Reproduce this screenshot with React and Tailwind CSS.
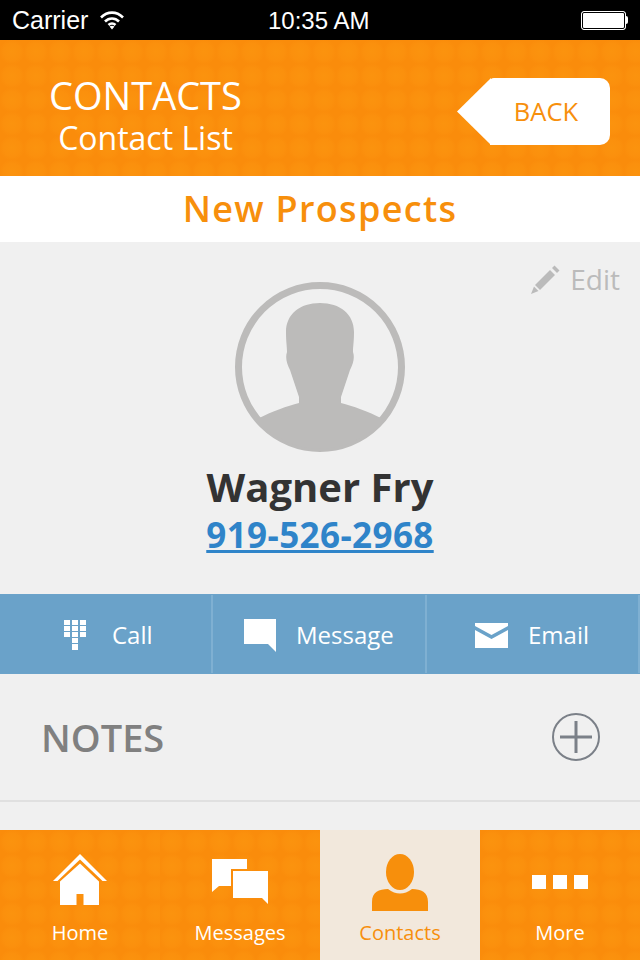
const orangeBg = "bg-[#fb8f0c] bg-[radial-gradient(circle,#fb930e_0%,#fb900d_50%,#fa8c0b_75%)] bg-[length:24px_24px]";

function TabBar() {
    return (
        <div className="mt-auto flex h-[130px] w-full">
            <div className={`${orangeBg} flex w-40 flex-col items-center`}>
                <svg className="mt-[24px] h-[52px] w-[56px]" viewBox="0 0 56 52" fill="white">
                    <path d="M28 0 L55 27 L50.500 27 L28 5.500 L5.500 27 L1 27 Z" />
                    <path fillRule="evenodd" d="M28 9.500 L47 27.500 L47 51 L8 51 L8 27.500 Z M24.500 40 L24.500 51 L31.500 51 L31.500 40 Z" />
                </svg>
                <span className="mb-[13px] mt-auto text-[20px] leading-[28px] text-white">Home</span>
            </div>
            <div className={`${orangeBg} flex w-40 flex-col items-center`}>
                <svg className="mt-[29px] h-[46px] w-[56px]" viewBox="0 0 56 46" fill="white">
                    <path d="M0 0 L35 0 L35 10 L19 10 L19 27 L7 27 L0 33 Z" />
                    <path d="M21 12 L56 12 L56 45 L50 39 L21 39 Z" />
                </svg>
                <span className="mb-[13px] mt-auto text-[20px] leading-[28px] text-white">Messages</span>
            </div>
            <div className="flex w-40 flex-col items-center bg-[#f2e8dc]">
                <svg className="mt-[24px] h-[57px] w-[56px]" viewBox="0 0 56 57" fill="#f78f0c">
                    <ellipse cx="28" cy="18" rx="14" ry="18" />
                    <path d="M0 57 L0 48 C0 38 7 35 16 35 C20 38 24 39.500 28 39.500 C32 39.500 36 38 40 35 C49 35 56 38 56 48 L56 57 Z" />
                </svg>
                <span className="mb-[13px] mt-auto text-[20px] leading-[28px] text-[#f78f0c]">Contacts</span>
            </div>
            <div className={`${orangeBg} flex w-40 flex-col items-center`}>
                <div className="mt-[45px] flex h-[14px] gap-[7px]">
                    <div className="w-[14px] bg-white" />
                    <div className="w-[14px] bg-white" />
                    <div className="w-[14px] bg-white" />
                </div>
                <span className="mb-[13px] mt-auto text-[20px] leading-[28px] text-white">More</span>
            </div>
        </div>
    );
}

export default function App() {
    return (
        <div className="flex h-[960px] w-[640px] flex-col overflow-hidden bg-[#f0f0f0] font-['Open_Sans',sans-serif]">
            {/* status bar */}
            <div className="relative flex h-10 shrink-0 items-center justify-between bg-black pl-[12px] pr-[12px] font-['Liberation_Sans',sans-serif] text-white">
                <div className="flex items-center gap-[12px]">
                    <span className="text-[25px] leading-none">Carrier</span>
                    <svg className="h-[20px] w-[24px]" viewBox="0 0 24 20" fill="none" stroke="white" strokeWidth="2.600">
                        <path d="M1 7.500 C7.500 1 16.500 1 23 7.500" />
                        <path d="M5 11.500 C9 7.500 15 7.500 19 11.500" />
                        <path d="M8.500 15 C10.500 13 13.500 13 15.500 15" />
                        <path d="M12 19.500 L9.500 16.500 C11 15.500 13 15.500 14.500 16.500 Z" fill="white" stroke="none" />
                    </svg>
                </div>
                <span className="absolute left-[268px] top-[7px] text-[24px] leading-[27px]">10:35 AM</span>
                <div className="flex items-center">
                    <div className="h-[19px] w-[45px] rounded-[3px] border border-white bg-white outline outline-black -outline-offset-2" />
                    <div className="h-[8px] w-[2px] rounded-r-sm bg-white" />
                </div>
            </div>

            {/* header */}
            <div className={`${orangeBg} flex h-[136px] shrink-0 items-center justify-between pl-[49px] pr-[30px] pt-[6px] text-white`}>
                <div className="mt-[9px] flex w-[193px] flex-col items-center">
                    <span className="text-[38px] leading-[44px]">CONTACTS</span>
                    <span className="text-[32px] leading-[42px]">Contact List</span>
                </div>
                <div className="flex items-center">
                    <svg className="-mr-px h-[67px] w-[34px]" viewBox="0 0 34 67" fill="white">
                        <path d="M34 0 L34 67 L0 33.500 Z" />
                    </svg>
                    <div className="flex h-[67px] w-[120px] items-center justify-center rounded-r-[10px] rounded-tl-[4px] bg-white pr-[8px] text-[25.500px] text-[#f78f0c]">
                        BACK
                    </div>
                </div>
            </div>

            {/* title */}
            <div className="flex h-[66px] shrink-0 items-center justify-center bg-white text-[36px] font-semibold tracking-[1.3px] text-[#f78f0c]">
                New Prospects
            </div>

            {/* profile */}
            <div className="relative flex h-[352px] shrink-0 flex-col items-center pt-[40px]">
                <div className="absolute right-[20px] top-[18px] flex items-center gap-[10px] text-[#bbbbbb]">
                    <svg className="h-[29px] w-[29px]" viewBox="0 0 29 29" fill="#bbbbbb">
                        <path d="M23.500 0.500 L28.500 5.500 L26 8 L21 3 Z" />
                        <path d="M19 5 L24 10 L9 25 L4 20 Z" />
                        <path d="M3 21.500 L7.500 26 L0 29 Z" />
                    </svg>
                    <span className="text-[28px] leading-[38px]">Edit</span>
                </div>
                <svg className="h-[170px] w-[170px]" viewBox="0 0 170 170">
                    <circle cx="85" cy="85" r="81.500" fill="#f0f0f0" stroke="#bcbbba" strokeWidth="7" />
                    <path fill="#bcbbba" d="M85 21 C105 21 119 32 119 50 C119 60 118 64 118 70 C120 76 118 82 115 88 L106 115 L106 121 C118 124 132 129 148 137 A81.500 81.500 0 0 1 22 137 C38 129 52 124 64 121 L64 115 L55 88 C52 82 50 76 52 70 C52 64 51 60 51 50 C51 32 65 21 85 21 Z" />
                </svg>
                <span className="mt-[8px] text-[40px] font-bold leading-[54px] text-[#333333]">Wagner Fry</span>
                <span className="mt-[2px] text-[35px] font-bold leading-[38px] tracking-[0.4px] text-[#2f84c9] underline">919-526-2968</span>
            </div>

            {/* actions */}
            <div className="flex h-20 shrink-0 border-y-[1px] border-[#6ba3ca] bg-[#6aa2c9] text-[24px] text-white">
                <div className="flex w-[213px] items-center gap-[26px] border-r-2 border-[#7fb0d2] pl-[64px] pt-[2px]">
                    <svg className="h-[30px] w-[22px]" viewBox="0 0 22 30" fill="white">
                        <rect x="0" y="0" width="6" height="5" /><rect x="8" y="0" width="6" height="5" /><rect x="16" y="0" width="6" height="5" />
                        <rect x="0" y="6" width="6" height="5" /><rect x="8" y="6" width="6" height="5" /><rect x="16" y="6" width="6" height="5" />
                        <rect x="0" y="12" width="6" height="5" /><rect x="8" y="12" width="6" height="5" /><rect x="16" y="12" width="6" height="5" />
                        <rect x="8" y="18" width="6" height="5" /><rect x="8" y="24" width="6" height="6" />
                    </svg>
                    <span>Call</span>
                </div>
                <div className="flex w-[214px] items-center gap-[20px] border-r-2 border-[#7fb0d2] pl-[30px] pt-[2px]">
                    <svg className="h-[33px] w-[33px]" viewBox="0 0 33 33" fill="white">
                        <path d="M1 0 L33 0 L33 33 L25 25 L1 25 Z" />
                    </svg>
                    <span>Message</span>
                </div>
                <div className="flex w-[213px] items-center gap-[20px] border-r-2 border-[#7fb0d2] pl-[48px] pt-[2px]">
                    <svg className="h-[25px] w-[33px]" viewBox="0 0 33 25" fill="white">
                        <path d="M0 0 L33 0 L33 3 L16.500 12 L0 3 Z" />
                        <path d="M0 7 L16.500 16 L33 7 L33 25 L0 25 Z" />
                    </svg>
                    <span>Email</span>
                </div>
            </div>

            {/* notes */}
            <div className="flex h-[128px] shrink-0 items-center justify-between border-b-2 border-[#e0e0e0] pl-[41px] pr-[40px]">
                <span className="text-[38px] font-semibold leading-none text-[#808080]">NOTES</span>
                <svg className="h-[48px] w-[48px]" viewBox="0 0 48 48" fill="none" stroke="#7b8088">
                    <circle cx="24" cy="24" r="23" strokeWidth="2" />
                    <path d="M24 8 L24 40 M8 24 L40 24" strokeWidth="3" />
                </svg>
            </div>

            <TabBar />
        </div>
    );
}
